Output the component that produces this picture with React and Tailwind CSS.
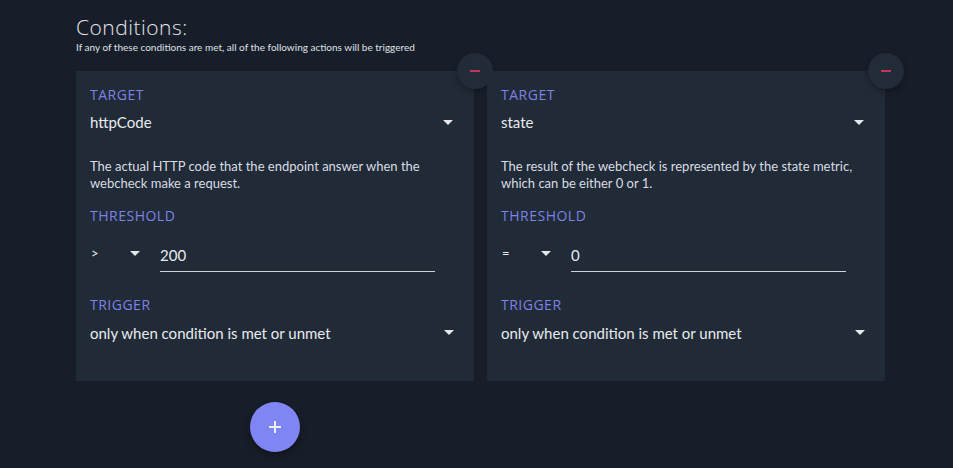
import { useState } from 'react'

// ── Data ─────────────────────────────────────────────────────
const CONDITIONS = [
  {
    target: 'httpCode',
    help: 'The actual HTTP code that the endpoint answer when the webcheck make a request.',
    op: '>',
    value: '200',
    trigger: 'only when condition is met or unmet',
  },
  {
    target: 'state',
    help: 'The result of the webcheck is represented by the state metric, which can be either 0 or 1.',
    op: '=',
    value: '0',
    trigger: 'only when condition is met or unmet',
  },
]

const Caret = () => (
  <svg width="10" height="5" viewBox="0 0 10 5" className="shrink-0">
    <path d="M0 0h10L5 5z" fill="#e5e7eb" />
  </svg>
)

function Label({ children }) {
  return (
    <div className="text-[14px] leading-[18px] tracking-[0.5px] text-[#7c82e6] font-['Open_Sans',sans-serif]">
      {children}
    </div>
  )
}

// ── Condition card ───────────────────────────────────────────
function ConditionCard({ c }) {
  return (
    <div className="relative bg-[#212a37] h-[310px] pl-[14px] pr-[20px] pt-[15px]">
      <button className="absolute -right-[19px] -top-[18px] w-9 h-9 rounded-full bg-[#222b38] shadow-[0_2px_6px_rgba(0,0,0,0.35)] flex items-center justify-center">
        <span className="block w-[10px] h-[2px] bg-[#c2335f]" />
      </button>

      <Label>TARGET</Label>
      <div className="mt-[8px] flex items-center justify-between">
        <span className="text-[15px] leading-[20px] text-[#e8eaee]">{c.target}</span>
        <span className="mr-[1px]"><Caret /></span>
      </div>
      <p className="mt-[26px] text-[13px] leading-[17px] text-[#d8dce2]">{c.help}</p>

      <div className="mt-[15px]"><Label>THRESHOLD</Label></div>
      <div className="mt-[19px] flex items-end">
        <div className="w-[50px] flex items-center justify-between pb-[8px]">
          <span className="text-[13px] text-[#e8eaee] pl-[1px]">{c.op}</span>
          <Caret />
        </div>
        <div className="ml-[20px] w-[275px] border-b border-[#cfd2d8] pb-[6px] text-[15px] leading-[20px] text-[#e8eaee]">
          {c.value}
        </div>
      </div>

      <div className="mt-[24px]"><Label>TRIGGER</Label></div>
      <div className="mt-[9px] flex items-center justify-between">
        <span className="text-[15px] leading-[20px] text-[#e8eaee]">{c.trigger}</span>
        <Caret />
      </div>
    </div>
  )
}

// ── App ──────────────────────────────────────────────────────
export default function App() {
  const [items] = useState(CONDITIONS)

  return (
    <div className="w-[953px] h-[468px] overflow-hidden bg-[#181e29] font-['Lato',sans-serif]">
      <div className="ml-[76px] w-[809px] pt-[14px]">
        <h2 className="text-[21px] leading-[26px] font-light tracking-[0.5px] text-[#e3e6eb] font-['Open_Sans',sans-serif]">
          Conditions:
        </h2>
        <p className="text-[10px] leading-[12px] text-[#dfe2e7] mt-[1px]">
          If any of these conditions are met, all of the following actions will be triggered
        </p>

        <div className="mt-[18px] grid grid-cols-2 gap-[13px]">
          {items.map((c) => (
            <ConditionCard key={c.target} c={c} />
          ))}
        </div>

        <div className="w-[398px] flex justify-center mt-[21px]">
          <button className="w-[50px] h-[50px] rounded-full bg-[#7f86f4] shadow-[0_3px_8px_rgba(0,0,0,0.4)] flex items-center justify-center">
            <svg width="12" height="12" viewBox="0 0 12 12">
              <path d="M6 0v12M0 6h12" stroke="#eef0ff" strokeWidth="2" />
            </svg>
          </button>
        </div>
      </div>
    </div>
  )
}
